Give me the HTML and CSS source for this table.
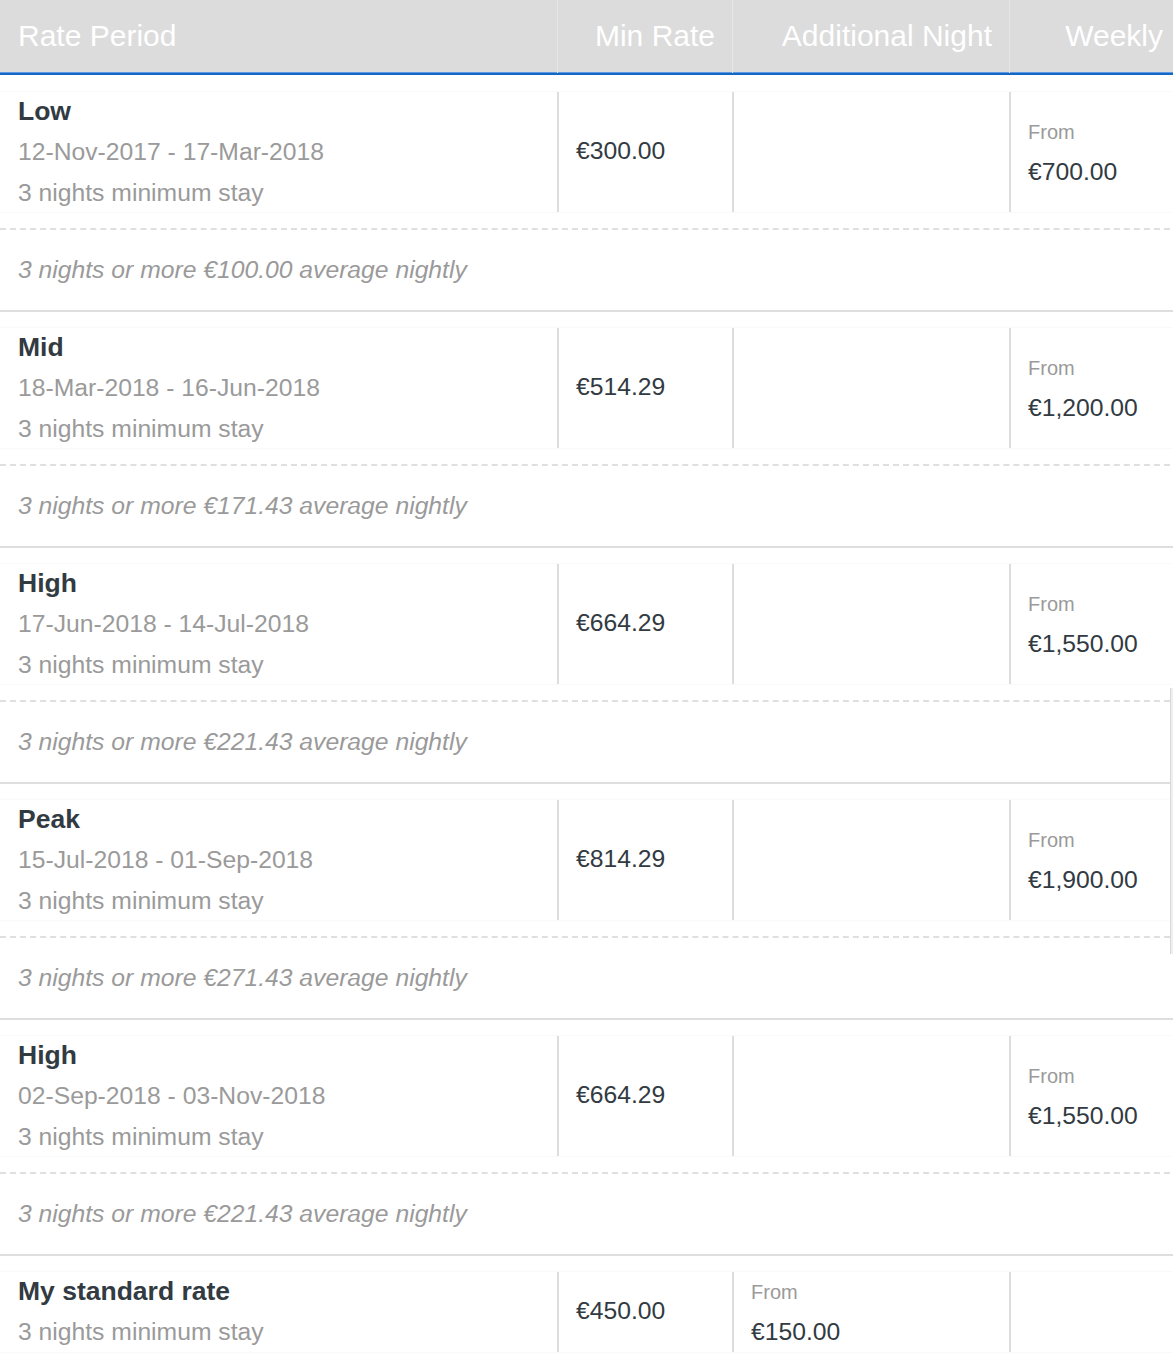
FILE: index.html
```html
<!DOCTYPE html>
<html>
<head>
<meta charset="utf-8">
<link rel="stylesheet" href="styles.css">
</head>
<body>
<div class="table">
  <div class="head">
    <div class="hcell first">Rate Period</div>
    <div class="hcell">Min Rate</div>
    <div class="hcell">Additional Night</div>
    <div class="hcell">Weekly</div>
  </div>
  <div class="rows">
    <div class="rate">
      <div class="main">
        <div class="cell period"><div class="title">Low</div><div class="sub">12-Nov-2017 - 17-Mar-2018</div><div class="sub">3 nights minimum stay</div></div>
        <div class="cell num"><div class="price">€300.00</div></div>
        <div class="cell num"></div>
        <div class="cell num"><div class="from">From</div><div class="price">€700.00</div></div>
      </div>
      <div class="promo">3 nights or more €100.00 average nightly</div>
    </div>
    <div class="rate">
      <div class="main">
        <div class="cell period"><div class="title">Mid</div><div class="sub">18-Mar-2018 - 16-Jun-2018</div><div class="sub">3 nights minimum stay</div></div>
        <div class="cell num"><div class="price">€514.29</div></div>
        <div class="cell num"></div>
        <div class="cell num"><div class="from">From</div><div class="price">€1,200.00</div></div>
      </div>
      <div class="promo">3 nights or more €171.43 average nightly</div>
    </div>
    <div class="rate">
      <div class="main">
        <div class="cell period"><div class="title">High</div><div class="sub">17-Jun-2018 - 14-Jul-2018</div><div class="sub">3 nights minimum stay</div></div>
        <div class="cell num"><div class="price">€664.29</div></div>
        <div class="cell num"></div>
        <div class="cell num"><div class="from">From</div><div class="price">€1,550.00</div></div>
      </div>
      <div class="promo">3 nights or more €221.43 average nightly</div>
    </div>
    <div class="rate">
      <div class="main">
        <div class="cell period"><div class="title">Peak</div><div class="sub">15-Jul-2018 - 01-Sep-2018</div><div class="sub">3 nights minimum stay</div></div>
        <div class="cell num"><div class="price">€814.29</div></div>
        <div class="cell num"></div>
        <div class="cell num"><div class="from">From</div><div class="price">€1,900.00</div></div>
      </div>
      <div class="promo">3 nights or more €271.43 average nightly</div>
    </div>
    <div class="rate">
      <div class="main">
        <div class="cell period"><div class="title">High</div><div class="sub">02-Sep-2018 - 03-Nov-2018</div><div class="sub">3 nights minimum stay</div></div>
        <div class="cell num"><div class="price">€664.29</div></div>
        <div class="cell num"></div>
        <div class="cell num"><div class="from">From</div><div class="price">€1,550.00</div></div>
      </div>
      <div class="promo">3 nights or more €221.43 average nightly</div>
    </div>
    <div class="rate last">
      <div class="main">
        <div class="cell period"><div class="title">My standard rate</div><div class="sub">3 nights minimum stay</div></div>
        <div class="cell num"><div class="price">€450.00</div></div>
        <div class="cell num"><div class="from">From</div><div class="price">€150.00</div></div>
        <div class="cell num"></div>
      </div>
    </div>
  </div>
</div>
<div class="scroll-hint"></div>
</body>
</html>
```
FILE: styles.css
```css
html, body {
  margin: 0;
  padding: 0;
  overflow: hidden;
  background: #fff;
}
body {
  font-family: "Liberation Sans", Arial, sans-serif;
  position: relative;
  height: 1360px;
}
.table {
  width: 1180px;
}
.head {
  display: grid;
  grid-template-columns: 557px 175px 277px 171px;
  height: 73px;
  background: #dcdcdc;
  border-bottom: 2px solid #1666c5;
  box-shadow: inset 0 -1px 0 #5a9ae0;
}
.hcell {
  color: #fff;
  font-size: 30px;
  line-height: 71px;
  text-align: right;
  padding: 0 17px;
  border-left: 1px solid #e7e7e7;
}
.hcell.first {
  text-align: left;
  padding-left: 18px;
  border-left: none;
}
.rows {
  padding-top: 1px;
}
.rate {
  border-bottom: 2px solid #dedede;
}
.main {
  display: grid;
  grid-template-columns: 557px 175px 277px 171px;
  margin: 16px 0;
  box-shadow: 0 1px 0 #fafafa, 0 -1px 0 #fafafa;
}
.cell {
  min-height: 120px;
}
.period {
  padding: 0 18px;
}
.num {
  border-left: 2px solid #dddddd;
  padding: 0 17px;
  display: flex;
  flex-direction: column;
  justify-content: center;
}
.title {
  font-size: 26.5px;
  font-weight: bold;
  color: #323a42;
  line-height: 39px;
}
.sub {
  font-size: 24.7px;
  color: #9a9a9a;
  line-height: 40px;
  padding-top: 1px;
}
.sub + .sub {
  line-height: 38px;
  padding-top: 2px;
}
.price {
  font-size: 24.7px;
  color: #323a42;
  line-height: 40px;
}
.num .price:only-child {
  margin-top: -3px;
}
.from {
  font-size: 20px;
  color: #9a9a9a;
  line-height: 40px;
}
.last .cell {
  min-height: 80px;
}
.promo {
  border-top: 2px dashed #dfdfdf;
  padding: 20px 18px;
  font-size: 24.7px;
  line-height: 40px;
  font-style: italic;
  color: #9a9a9a;
}
.scroll-hint {
  position: absolute;
  right: 0;
  top: 688px;
  width: 2px;
  height: 266px;
  background: #efefef;
  border-left: 1px solid #d9d9d9;
}
```
